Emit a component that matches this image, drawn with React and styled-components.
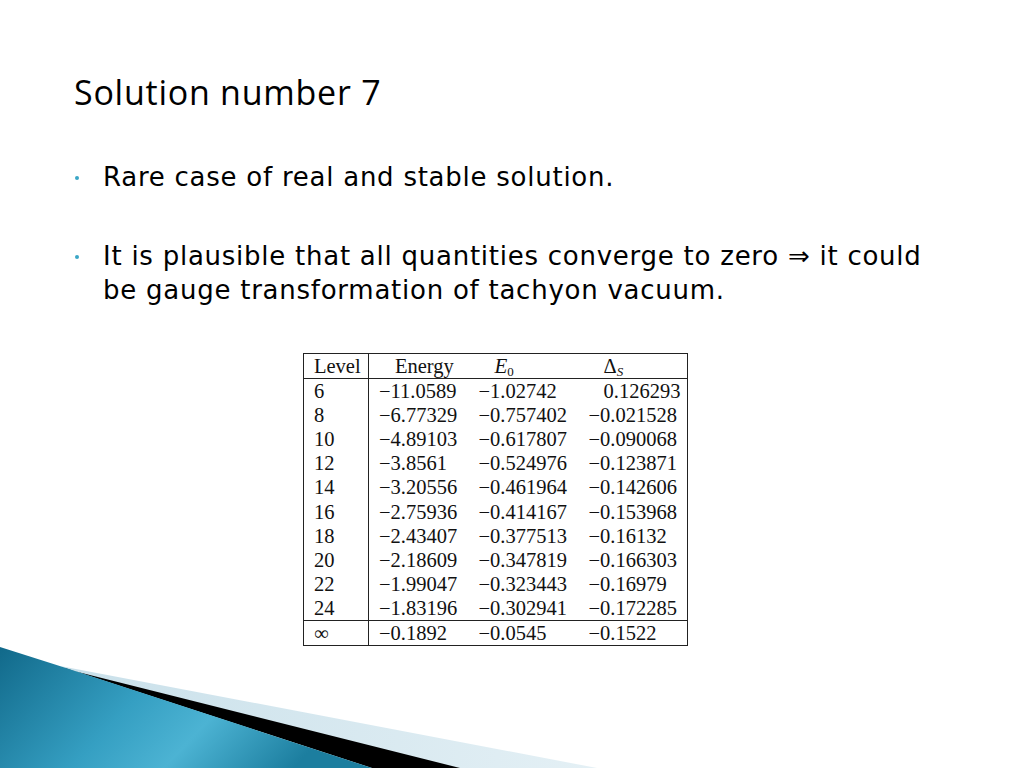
import React from "react";
import styled, { createGlobalStyle } from "styled-components";

const Global = createGlobalStyle`
  html, body { margin: 0; padding: 0; background: #ffffff; }
  #root { width: 1024px; height: 768px; }
`;

const Slide = styled.div`
  position: relative;
  width: 1024px;
  height: 768px;
  overflow: hidden;
  background: #ffffff;
  box-sizing: border-box;
  padding: 70px 0 0 74px;
`;

const Title = styled.h1`
  margin: 0;
  font-family: "Open Sans", "Noto Sans", sans-serif;
  font-weight: 500;
  font-size: 34px;
  line-height: 44px;
  color: #000;
  letter-spacing: 0.75px;
`;

const BulletList = styled.ul`
  list-style: none;
  margin: 46px 0 0 0;
  padding: 0;
  display: flex;
  flex-direction: column;
  gap: 45px;
`;

const Bullet = styled.li`
  display: flex;
  align-items: flex-start;
  font-family: "DejaVu Sans", Verdana, sans-serif;
  font-size: 26px;
  line-height: 34px;
  letter-spacing: 0.75px;
  color: #000;
  width: 880px;
`;

const Dot = styled.span`
  flex: 0 0 auto;
  width: 4px;
  height: 4px;
  border-radius: 50%;
  background: #3aa6c6;
  margin: 16px 24px 0 1px;
`;

const TableWrap = styled.div`
  margin: 46px 0 0 229px;
`;

const Table = styled.table`
  border-collapse: collapse;
  border: 1px solid #222;
  font-family: "Liberation Serif", "Times New Roman", serif;
  font-size: 20.5px;
  color: #111;
`;

const Row = styled.tr`
  height: ${(p) => p.$h}px;
  border-top: ${(p) => (p.$rule ? "1px solid #222" : "none")};
`;

const Cell = styled.td`
  padding: 0 0 0 ${(p) => p.$pl}px;
  width: ${(p) => p.$w}px;
  box-sizing: border-box;
  border-right: ${(p) => (p.$divider ? "1px solid #222" : "none")};
  white-space: nowrap;
  line-height: 20px;
  vertical-align: middle;
  text-align: left;
`;

const Italic = styled.i`
  font-style: italic;
  font-size: ${(p) => p.$size || 21}px;
`;

const Sub = styled.sub`
  font-size: 13px;
  vertical-align: -3px;
  line-height: 0;
`;

const Decor = styled.svg`
  position: absolute;
  left: 0;
  bottom: 0;
  width: 620px;
  height: 130px;
`;

const rows = [
  ["6", "\u221211.0589", "\u22121.02742", "0.126293", true],
  ["8", "\u22126.77329", "\u22120.757402", "\u22120.021528"],
  ["10", "\u22124.89103", "\u22120.617807", "\u22120.090068"],
  ["12", "\u22123.8561", "\u22120.524976", "\u22120.123871"],
  ["14", "\u22123.20556", "\u22120.461964", "\u22120.142606"],
  ["16", "\u22122.75936", "\u22120.414167", "\u22120.153968"],
  ["18", "\u22122.43407", "\u22120.377513", "\u22120.16132"],
  ["20", "\u22122.18609", "\u22120.347819", "\u22120.166303"],
  ["22", "\u22121.99047", "\u22120.323443", "\u22120.16979"],
  ["24", "\u22121.83196", "\u22120.302941", "\u22120.172285"],
];

export default function App() {
  return (
    <>
      <Global />
      <Slide>
        <Title>Solution number 7</Title>
        <BulletList>
          <Bullet>
            <Dot />
            <span>Rare case of real and stable solution.</span>
          </Bullet>
          <Bullet>
            <Dot />
            <span>
              It is plausible that all quantities converge to zero ⇒ it could
              be gauge transformation of tachyon vacuum.
            </span>
          </Bullet>
        </BulletList>
        <TableWrap>
          <Table>
            <tbody>
              <Row $h={25}>
                <Cell $pl={10} $w={65} $divider>Level</Cell>
                <Cell $pl={26} $w={100}>Energy</Cell>
                <Cell $pl={26} $w={110}>
                  <Italic>E</Italic>
                  <Sub>0</Sub>
                </Cell>
                <Cell $pl={25} $w={109}>
                  Δ<Sub><Italic $size={13}>S</Italic></Sub>
                </Cell>
              </Row>
              {rows.map((r, i) => (
                <Row key={r[0]} $h={24.2} $rule={i === 0}>
                  <Cell $pl={10} $w={65} $divider>{r[0]}</Cell>
                  <Cell $pl={10} $w={100}>{r[1]}</Cell>
                  <Cell $pl={10} $w={110}>{r[2]}</Cell>
                  <Cell $pl={r[4] ? 25 : 10} $w={109}>{r[3]}</Cell>
                </Row>
              ))}
              <Row $h={25} $rule>
                <Cell $pl={10} $w={65} $divider>∞</Cell>
                <Cell $pl={10} $w={100}>−0.1892</Cell>
                <Cell $pl={10} $w={110}>−0.0545</Cell>
                <Cell $pl={10} $w={109}>−0.1522</Cell>
              </Row>
            </tbody>
          </Table>
        </TableWrap>
        <Decor viewBox="0 0 620 130" preserveAspectRatio="none">
          <defs>
            <linearGradient id="blueG" x1="0" y1="0" x2="1" y2="0.3">
              <stop offset="0" stopColor="#11698a" />
              <stop offset="0.45" stopColor="#359fc2" />
              <stop offset="0.68" stopColor="#4cb3d3" />
              <stop offset="1" stopColor="#1c7e9f" />
            </linearGradient>
            <linearGradient id="lightG" x1="0" y1="0" x2="1" y2="0">
              <stop offset="0" stopColor="#c9e0ea" />
              <stop offset="1" stopColor="#e4f0f5" />
            </linearGradient>
          </defs>
          <polygon points="60,28 597,130 372,130" fill="url(#lightG)" />
          <polygon points="62,30 460,130 372,130 65,30" fill="#000" />
          <polygon points="0,9 66,30 372,130 0,130" fill="url(#blueG)" />
        </Decor>
      </Slide>
    </>
  );
}
